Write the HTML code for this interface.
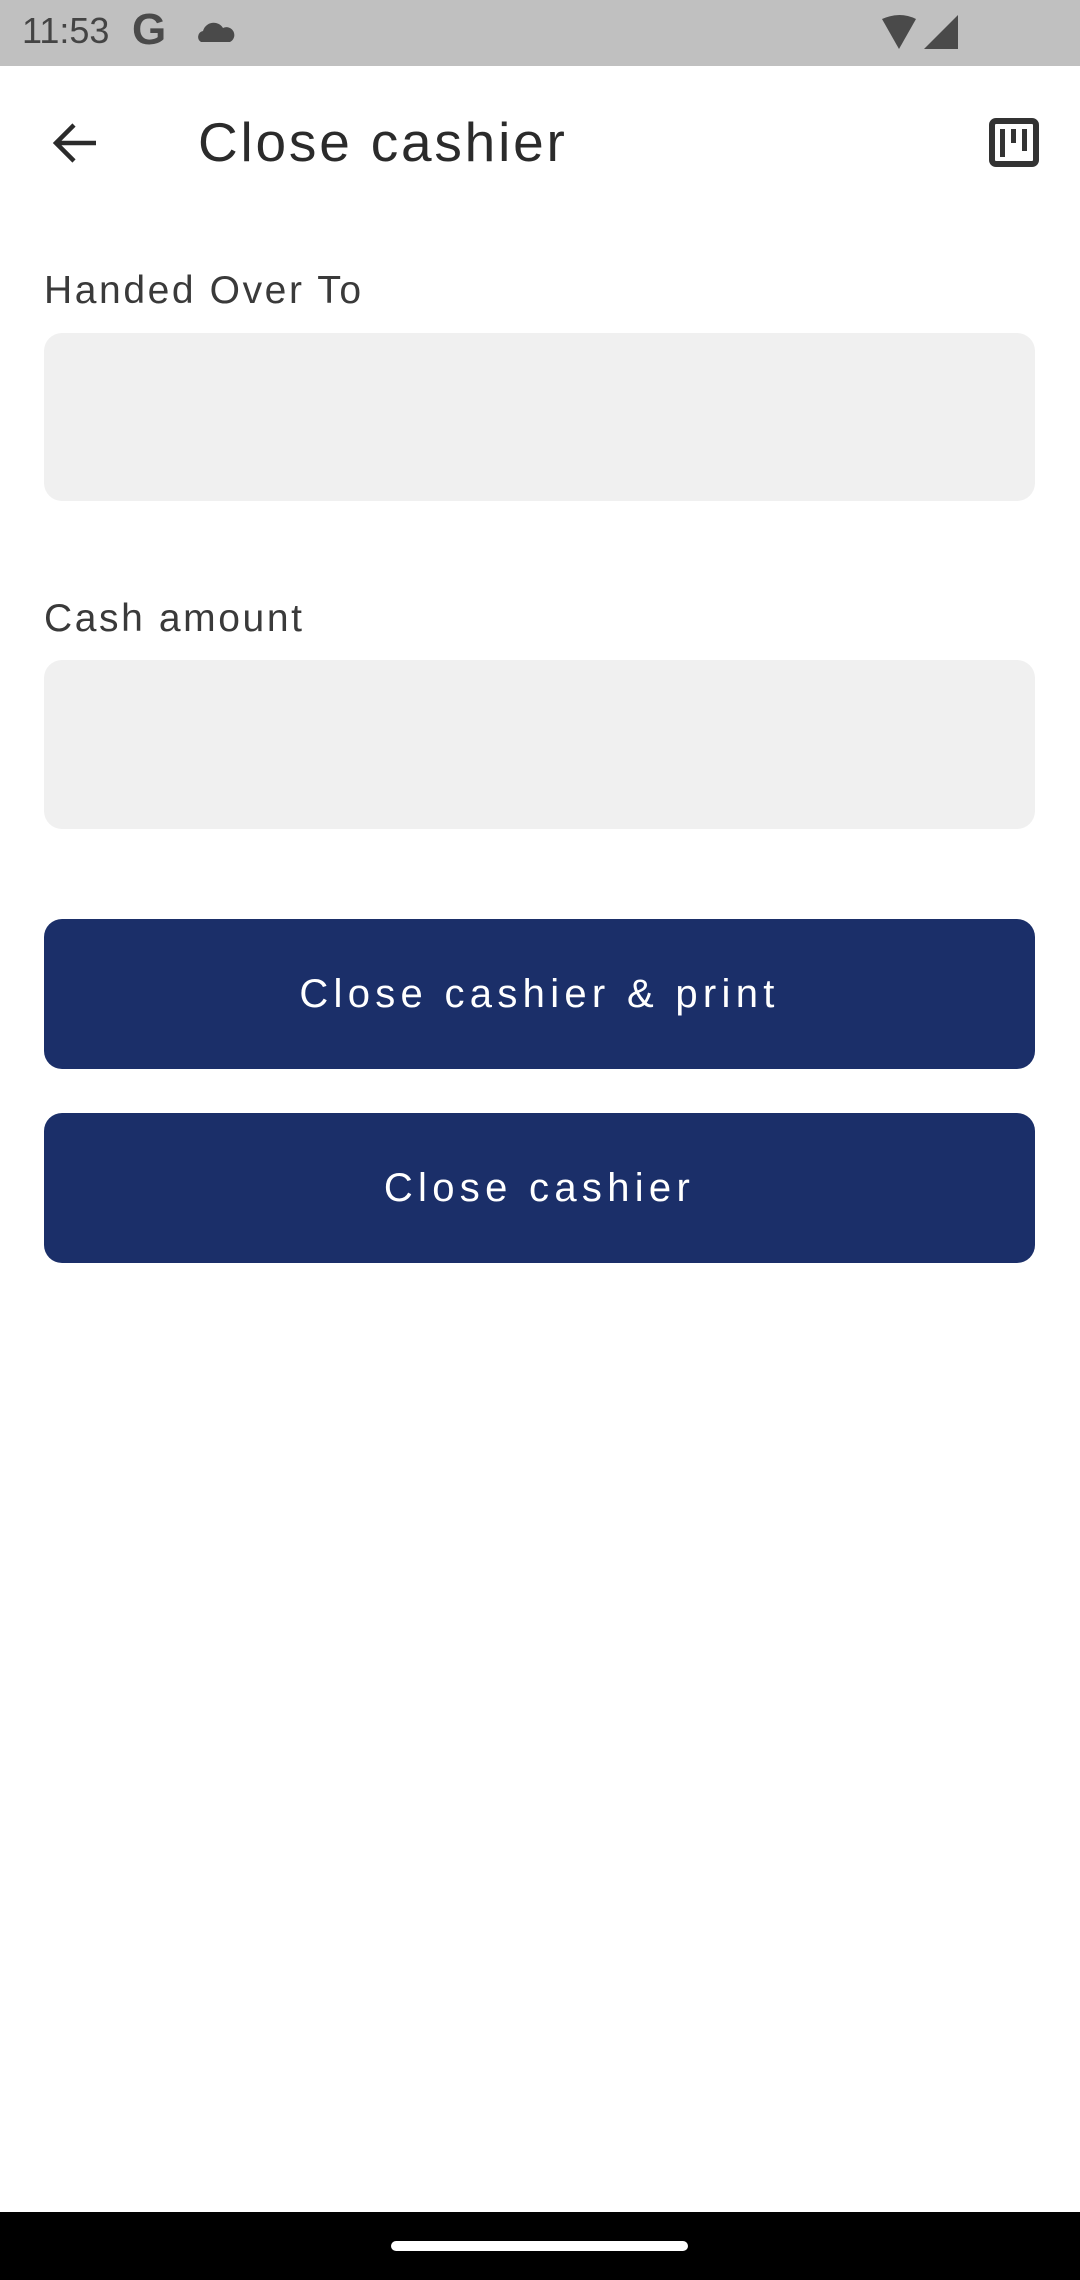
<!DOCTYPE html>
<html><head><meta charset="utf-8"><style>
html,body{margin:0;padding:0;}
body{width:1080px;height:2280px;position:relative;background:#fff;font-family:"Liberation Sans",sans-serif;overflow:hidden;}
.sb{position:absolute;left:0;top:0;width:1080px;height:66px;background:#c0c0c0;}
.abs{position:absolute;}
.label{position:absolute;left:44px;font-size:39px;color:#3a3a3a;letter-spacing:2.6px;}
.inp{position:absolute;left:44px;width:991px;height:168px;background:#f0f0f0;border-radius:18px;}
.btn{position:absolute;left:44px;width:991px;height:150px;background:#1b2f69;border-radius:18px;color:#fff;font-size:40px;letter-spacing:5.3px;text-align:center;line-height:150px;}
</style></head><body>
<div class="sb">
<div class="abs" style="left:22px;top:10px;font-size:36px;color:#444;">11:53</div>
<div class="abs" style="left:132px;top:5px;font-size:44px;font-weight:bold;color:#4a4a4a;">G</div>
<svg class="abs" style="left:195px;top:18px" width="40" height="26" viewBox="0 0 40 26"><path d="M6 24 a6 6 0 0 1 2-11 a11 11 0 0 1 20-3 a7 7 0 0 1 7 14z" fill="#4a4a4a"/></svg>
<svg class="abs" style="left:880px;top:15px" width="80" height="36" viewBox="0 0 80 36"><path d="M2 4 Q20 -4 36 4 L19 34z" fill="#4a4a4a"/><path d="M78 0 L78 34 L44 34z" fill="#4a4a4a"/></svg>
</div>
<svg class="abs" style="left:50px;top:120px" width="50" height="46" viewBox="0 0 50 46"><path d="M46 23 H8 M24 5 L6 23 L24 41" stroke="#2b2b2b" stroke-width="4.5" fill="none"/></svg>
<div class="abs" style="left:198px;top:110px;font-size:55px;color:#2b2b2b;letter-spacing:2.8px;">Close cashier</div>
<svg class="abs" style="left:988px;top:117px" width="52" height="52" viewBox="0 0 52 52"><rect x="4" y="4" width="44" height="43" rx="4" fill="none" stroke="#333" stroke-width="6"/><rect x="12" y="12" width="5" height="28" fill="#333"/><rect x="23" y="12" width="5" height="14" fill="#333"/><rect x="34" y="12" width="5" height="22" fill="#333"/></svg>
<div class="label" style="top:269px;">Handed Over To</div>
<div class="inp" style="top:333px;"></div>
<div class="label" style="top:597px;">Cash amount</div>
<div class="inp" style="top:660px;height:169px;"></div>
<div class="btn" style="top:919px;">Close cashier &amp; print</div>
<div class="btn" style="top:1113px;">Close cashier</div>
<div class="abs" style="left:0;top:2212px;width:1080px;height:68px;background:#000;"></div>
<div class="abs" style="left:391px;top:2241px;width:297px;height:10px;border-radius:5px;background:#fff;"></div>
</body></html>
